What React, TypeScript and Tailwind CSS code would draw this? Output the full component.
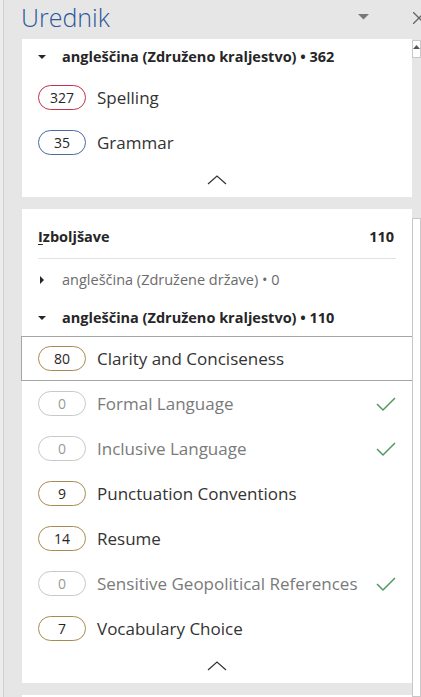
import type { FC } from 'react';

type Item = {
  count: number;
  label: string;
  tone: 'gold' | 'gray' | 'red' | 'blue';
  done?: boolean;
  active?: boolean;
};

const pillBorder = {
  gold: 'border-[#a88b53] text-[#262626]',
  gray: 'border-[#c8c8c8] text-[#9a9a9a]',
  red: 'border-[#c4314b] text-[#262626]',
  blue: 'border-[#4a6aa0] text-[#262626]',
};

const spelling: Item[] = [
  { count: 327, label: 'Spelling', tone: 'red' },
  { count: 35, label: 'Grammar', tone: 'blue' },
];

const refinements: Item[] = [
  { count: 80, label: 'Clarity and Conciseness', tone: 'gold', active: true },
  { count: 0, label: 'Formal Language', tone: 'gray', done: true },
  { count: 0, label: 'Inclusive Language', tone: 'gray', done: true },
  { count: 9, label: 'Punctuation Conventions', tone: 'gold' },
  { count: 14, label: 'Resume', tone: 'gold' },
  { count: 0, label: 'Sensitive Geopolitical References', tone: 'gray', done: true },
  { count: 7, label: 'Vocabulary Choice', tone: 'gold' },
];

const Caret: FC<{ open: boolean }> = ({ open }) => (
  <svg width="8" height="8" viewBox="0 0 8 8" className="shrink-0">
    {open ? <path d="M0 2 L8 2 L4 6 Z" fill="#262626" /> : <path d="M2 0 L6 4 L2 8 Z" fill="#262626" />}
  </svg>
);

const ChevronUp = () => (
  <div className="flex justify-center h-[32px] items-center shrink-0 pb-[2px]">
    <svg width="20" height="10" viewBox="0 0 20 10">
      <path d="M1 9 L10 1 L19 9" fill="none" stroke="#333" strokeWidth="1.2" />
    </svg>
  </div>
);

const Check = () => (
  <svg width="20" height="16" viewBox="0 0 20 16" className="shrink-0">
    <path d="M1 8 L7 14 L19 2" fill="none" stroke="#4f9a5f" strokeWidth="1.5" />
  </svg>
);

const Row: FC<{ item: Item }> = ({ item }) => (
  <div
    className={`h-[45px] shrink-0 flex items-center pl-4 pr-4 ${
      item.active ? 'border border-[#a6a6a6] -mx-px' : ''
    }`}
  >
    <div
      className={`w-[48px] h-[25px] rounded-full border flex items-center justify-center text-[14px] shrink-0 ${pillBorder[item.tone]}`}
    >
      {item.count}
    </div>
    <div className={`ml-[11px] text-[17px] flex-1 ${item.done ? 'text-[#7a7a7a]' : 'text-[#333]'}`}>{item.label}</div>
    {item.done && <Check />}
  </div>
);

export default function App() {
  return (
    <div
      className="w-[421px] h-[697px] bg-[#e6e6e6] overflow-hidden flex"
      style={{ fontFamily: '"Segoe UI", "Open Sans", "Noto Sans", sans-serif' }}
    >
      <div className="w-[4px] border-r border-[#d0d0d0] bg-[#ececec] shrink-0" />
      <div className="w-[408px] shrink-0 pl-[18px] flex flex-col">
        <div className="h-[39px] shrink-0 flex items-center justify-between">
          <div className="text-[25px] font-light text-[#2b579a] leading-none -mt-[4px] -ml-[1px]">Urednik</div>
          <svg width="11" height="7" viewBox="0 0 11 7" className="mr-[43px] -mt-[6px]">
            <path d="M0 1 L11 1 L5.5 6.5 Z" fill="#777" />
          </svg>
        </div>
        <div className="bg-white shrink-0 flex flex-col">
          <div className="h-[36px] shrink-0 flex items-center gap-[16px] pl-[16px] text-[14.5px] font-bold text-[#262626]">
            <Caret open />
            <span>angleščina (Združeno kraljestvo) • 362</span>
          </div>
          {spelling.map((it) => (
            <Row key={it.label} item={it} />
          ))}
          <ChevronUp />
        </div>
        <div className="h-[12px] shrink-0" />
        <div className="bg-white shrink-0 flex flex-col">
          <div className="mx-4 h-[50px] shrink-0 flex items-center justify-between pt-[6px] border-b border-[#e1e1e1] text-[14.5px] font-bold text-[#262626]">
            <span>
              <span className="underline underline-offset-2">I</span>zboljšave
            </span>
            <span className="mr-[2px]">110</span>
          </div>
          <div className="h-[41px] shrink-0 flex items-center gap-[16px] pl-[16px] text-[14.5px] text-[#6b6b6b]">
            <Caret open={false} />
            <span>angleščina (Združene države) • 0</span>
          </div>
          <div className="h-[36px] shrink-0 flex items-center gap-[16px] pl-[16px] text-[14.5px] font-bold text-[#262626]">
            <Caret open />
            <span>angleščina (Združeno kraljestvo) • 110</span>
          </div>
          {refinements.map((it) => (
            <Row key={it.label} item={it} />
          ))}
          <ChevronUp />
        </div>
        <div className="h-[12px] shrink-0" />
        <div className="bg-white h-[20px] shrink-0" />
      </div>
      <div className="flex-1 flex flex-col">
        <div className="h-[40px] shrink-0 flex items-center justify-end">
          <svg width="12" height="12" viewBox="0 0 12 12" className="-mr-[4px] -mt-[4px]">
            <path d="M0 0 L12 12 M12 0 L0 12" stroke="#666" strokeWidth="1.3" />
          </svg>
        </div>
        <div className="h-[18px] shrink-0 bg-white border border-[#c8c8c8] flex justify-center pt-[4px]">
          <svg width="7" height="4" viewBox="0 0 7 4">
            <path d="M0 4 L3.5 0 L7 4 Z" fill="#555" />
          </svg>
        </div>
        <div className="h-[160px] shrink-0" />
        <div className="flex-1 bg-white border border-[#c8c8c8]" />
      </div>
    </div>
  );
}
